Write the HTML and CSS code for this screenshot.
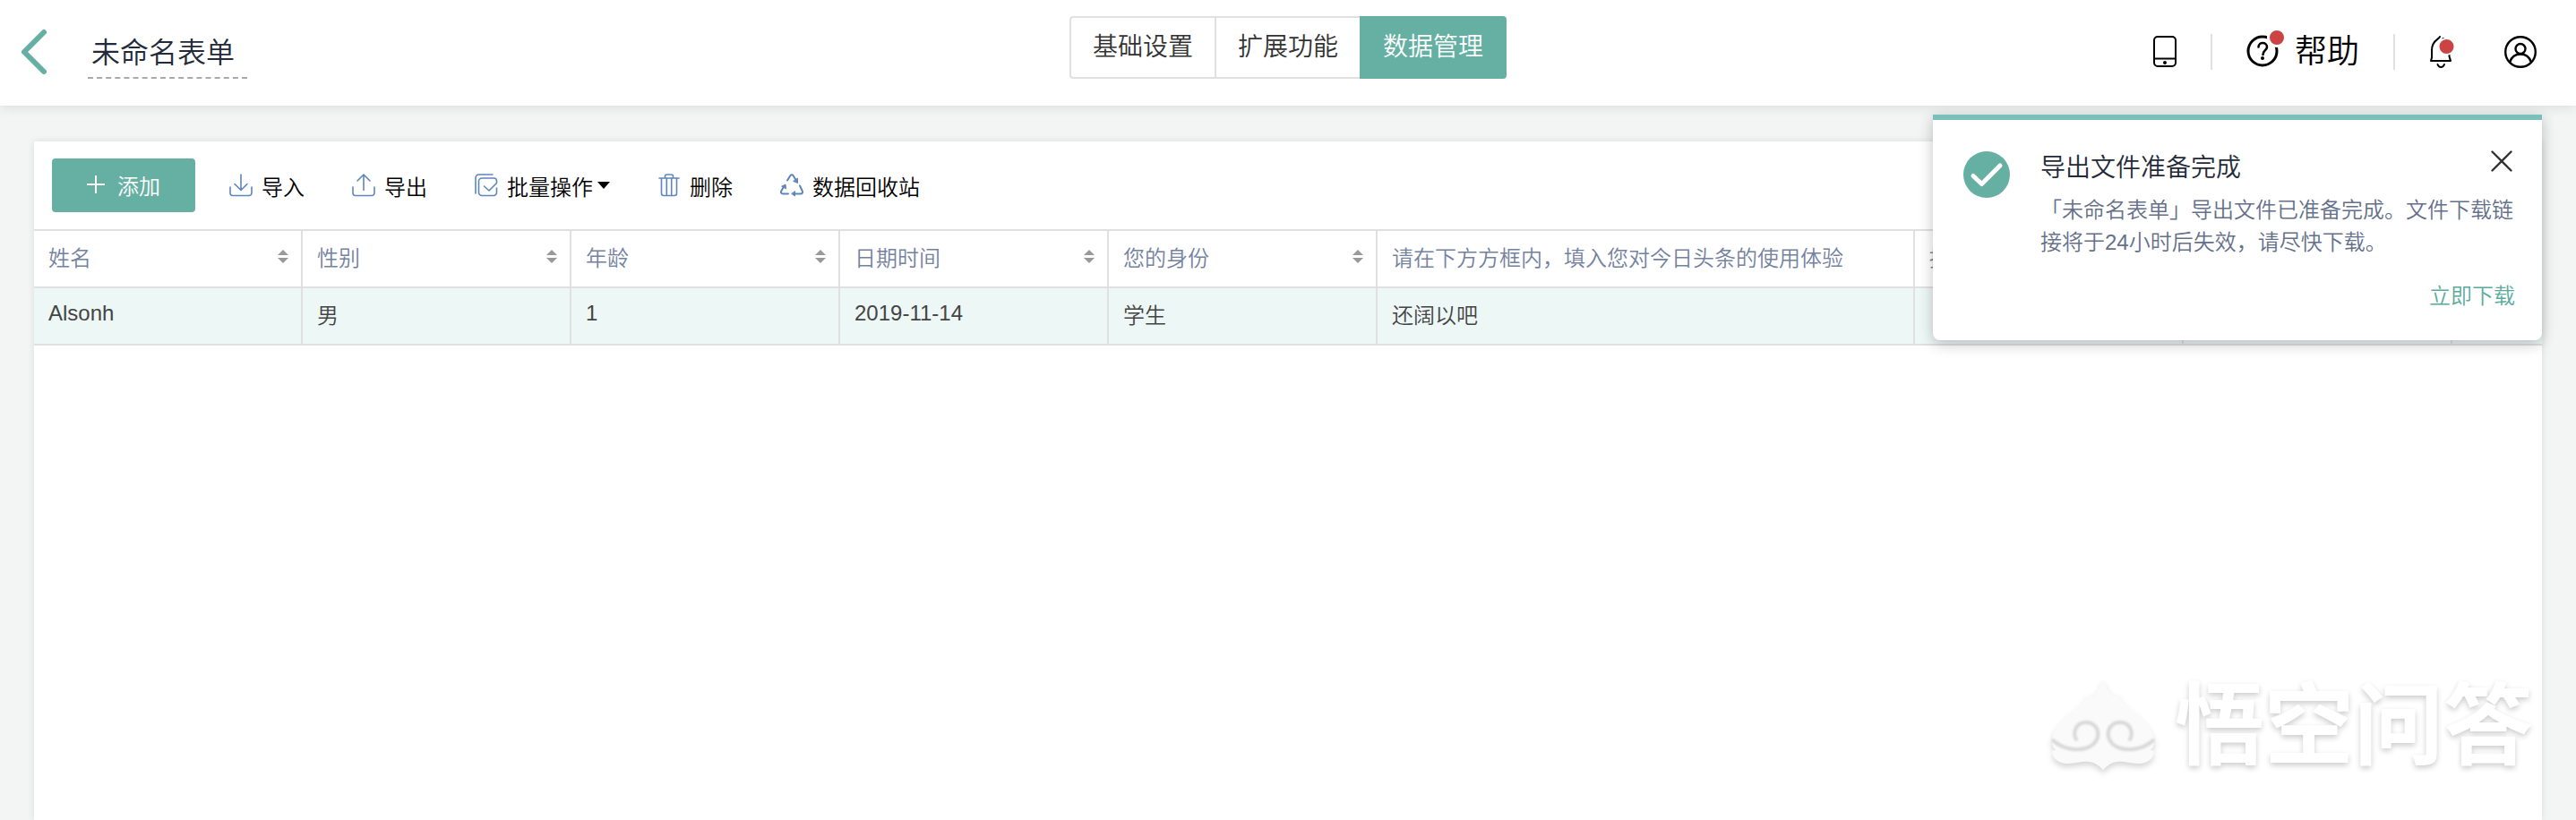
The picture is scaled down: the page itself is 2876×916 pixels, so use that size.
FILE: index.html
```
<!DOCTYPE html>
<html lang="zh-CN">
<head>
  <meta charset="UTF-8">
  <meta name="viewport" content="width=device-width, initial-scale=1.0">
  <title>未命名表单</title>
  <link rel="stylesheet" href="styles.css">
</head>
<body>

<header class="header">
  <div class="header-left">
    <a class="back-link" href="#" aria-label="返回">
      <svg width="32" height="54" viewBox="0 0 32 54" fill="none" stroke="#66b0a3" stroke-width="6" stroke-linecap="round" stroke-linejoin="round"><path d="M27 5 5 27l22 22"/></svg>
    </a>
    <input class="form-title" type="text" value="未命名表单" aria-label="表单名称">
  </div>

  <nav class="tabs">
    <a class="tab" href="#">基础设置</a>
    <a class="tab" href="#">扩展功能</a>
    <a class="tab active" href="#">数据管理</a>
  </nav>

  <div class="header-right">
    <button class="icon-button" type="button" aria-label="手机预览">
      <svg width="26" height="36" viewBox="0 0 26 36" fill="none" stroke="#000" stroke-width="2"><rect x="1" y="1" width="24" height="33" rx="4"/><path d="M1 25.5h24"/><circle cx="13" cy="30" r="2" fill="#000" stroke="none"/></svg>
    </button>
    <span class="divider"></span>
    <button class="icon-button help" type="button">
      <svg width="42" height="44" viewBox="0 0 42 44" fill="none" stroke="#000" stroke-width="3" stroke-linecap="round"><circle cx="18" cy="25" r="16"/><path d="M13.5 20.5c0-6 9.500-6 9.500 0 0 3.500-4.500 4-4.500 8.500" stroke-width="2.600"/><circle cx="18" cy="33" r="2" fill="#000" stroke="none"/><circle cx="34" cy="10" r="9.500" fill="#cc4343" stroke="#fff"/></svg>
      帮助
    </button>
    <span class="divider"></span>
    <button class="icon-button bell" type="button" aria-label="消息">
      <svg width="28" height="38" viewBox="0 0 28 38" fill="none" stroke="#000" stroke-width="2" stroke-linecap="round" stroke-linejoin="round"><path d="M12 2c-1 3-9 4-9 15v8.500L2 29h22l-1.500-5V14c0-6-5-9-7-10"/><path d="M9.500 33c1.500 4 6 4 7.500 0"/><circle cx="19.500" cy="13" r="9" fill="#cc4343" stroke="#fff"/></svg>
    </button>
    <button class="icon-button" type="button" aria-label="个人中心">
      <svg width="36" height="36" viewBox="0 0 36 36" fill="none" stroke="#000" stroke-width="2.400"><circle cx="18" cy="18" r="16.800"/><circle cx="18" cy="14.500" r="5.500"/><path d="M6 29.500c2-6 6.500-9 12-9s10 3 12 9"/></svg>
    </button>
  </div>
</header>

<main class="card">
  <div class="toolbar">
    <button class="add-button" type="button">
      <svg width="20" height="20" viewBox="0 0 20 20" stroke="#fff" stroke-width="2"><path d="M10 0v20M0 10h20"/></svg>
      添加
    </button>
    <button class="tool" type="button">
      <svg class="tool-icon" viewBox="0 0 26 26"><path d="M1 15v6.500a3 3 0 0 0 3 3h18a3 3 0 0 0 3-3V15M13 1v17M6 11.500l7 7 7-7"/></svg>
      导入
    </button>
    <button class="tool" type="button">
      <svg class="tool-icon" viewBox="0 0 26 26"><path d="M1 15v6.500a3 3 0 0 0 3 3h18a3 3 0 0 0 3-3V15M13 18.500V1M6 8l7-7 7 7"/></svg>
      导出
    </button>
    <button class="tool" type="button">
      <svg class="tool-icon" viewBox="0 0 26 26"><path d="M1 22V4.500A3.500 3.500 0 0 1 4.500 1H20M24.500 16v5a3.500 3.500 0 0 1-3.500 3.500H8A3.500 3.500 0 0 1 4.500 21V8.500A3.500 3.500 0 0 1 8 5h13.500a3 3 0 0 1 3 3v2.500L16 19l-5.500-5"/></svg>
      批量操作<span class="caret"></span>
    </button>
    <button class="tool" type="button">
      <svg class="tool-icon" viewBox="0 0 26 26"><path d="M2 5h22M8.500 5V3a2 2 0 0 1 2-2h5a2 2 0 0 1 2 2v2M4.500 5v17a2.500 2.500 0 0 0 2.500 2.500h12A2.500 2.500 0 0 0 21.500 22V5M10.300 6v18M15.700 6v18"/></svg>
      删除
    </button>
    <button class="tool" type="button">
      <svg class="tool-icon" viewBox="0 0 26 26"><path d="M8 7.500 11.500 2a1.800 1.800 0 0 1 3 0L17.500 7M22 13.500l2.800 6a2 2 0 0 1-2 3H16M9 22.500H3a2 2 0 0 1-1.800-3L4 14.500" stroke-width="2"/><path d="M19.500 5.500v5l-4.500-2zM2 14l4-2 .5 4.500zM16.500 20v5L13 22.500z" fill="#5f86b8" stroke-width="1"/></svg>
      数据回收站
    </button>
  </div>

  <table class="data-table">
    <colgroup>
      <col class="col">
      <col class="col">
      <col class="col">
      <col class="col">
      <col class="col">
      <col class="col-wide">
      <col class="col">
      <col class="col">
      <col>
    </colgroup>
    <thead>
      <tr>
        <th><div class="th-inner">姓名<button class="sort" type="button" aria-label="排序"></button></div></th>
        <th><div class="th-inner">性别<button class="sort" type="button" aria-label="排序"></button></div></th>
        <th><div class="th-inner">年龄<button class="sort" type="button" aria-label="排序"></button></div></th>
        <th><div class="th-inner">日期时间<button class="sort" type="button" aria-label="排序"></button></div></th>
        <th><div class="th-inner">您的身份<button class="sort" type="button" aria-label="排序"></button></div></th>
        <th>请在下方方框内，填入您对今日头条的使用体验</th>
        <th>提交人</th>
        <th></th>
        <th></th>
      </tr>
    </thead>
    <tbody>
      <tr>
        <td>Alsonh</td>
        <td>男</td>
        <td>1</td>
        <td>2019-11-14</td>
        <td>学生</td>
        <td>还阔以吧</td>
        <td></td>
        <td></td>
        <td></td>
      </tr>
    </tbody>
  </table>
</main>

<div class="notification" role="alert">
  <svg class="notification-icon" width="52" height="52" viewBox="0 0 52 52" fill="none"><circle cx="26" cy="26" r="26" fill="#66b0a3"/><path d="M11 27.500 20.500 36.500 41 16" stroke="#fff" stroke-width="5" stroke-linecap="round" stroke-linejoin="round"/></svg>
  <div class="notification-body">
    <div class="notification-head">
      <h2 class="notification-title">导出文件准备完成</h2>
      <button class="icon-button" type="button" aria-label="关闭">
        <svg width="24" height="24" viewBox="0 0 24 24" stroke="#333" stroke-width="2.400" stroke-linecap="round"><path d="M1.500 1.500l21 21M22.500 1.500l-21 21"/></svg>
      </button>
    </div>
    <p class="notification-text">「未命名表单」导出文件已准备完成。文件下载链接将于24小时后失效，请尽快下载。</p>
    <a class="notification-link" href="#">立即下载</a>
  </div>
</div>

<div class="watermark">
  <svg class="watermark-logo" width="116" height="106" viewBox="0 0 116 106">
    <path class="flame" d="M58 0c-2 9-7 15-12 21l-4-4C37 32 1 48 1 70c0 5 2 8 4 10-2 0-4 0-4 2 1 8 8 13 17 13 10 0 16-3 25-2 7 1 11 5 15 9 4-4 8-8 15-9 9-1 15 2 25 2 9 0 16-5 17-13 0-2-2-2-4-2 2-2 4-5 4-10 0-22-36-38-41-53l-5 3c-5-6-9-12-11-20z"/>
    <g class="swirls">
      <path d="M2 69c10 9 24 12 36 9 20-5 18-29 1-29-12 0-15 12-11 19"/>
      <path d="M114 69c-10 9-24 12-36 9-20-5-18-29-1-29 12 0 15 12 11 19"/>
    </g>
  </svg>
  <span>悟空问答</span>
</div>

</body>
</html>
```
FILE: styles.css
```
* {
  box-sizing: border-box;
}

body {
  margin: 0;
  min-height: 100vh;
  display: flex;
  flex-direction: column;
  background-color: #f3f5f4;
  font-family: "Liberation Sans", "Noto Sans CJK SC", sans-serif;
  font-size: 24px;
  font-weight: 350;
  color: #444;
}

button,
input {
  font: inherit;
  color: inherit;
  background: none;
  border: none;
  padding: 0;
}

button {
  cursor: pointer;
}

a {
  text-decoration: none;
}

svg {
  display: block;
  flex-shrink: 0;
}

/* header */
.header {
  display: grid;
  grid-template-columns: 1fr auto 1fr;
  align-items: end;
  padding: 18px 22px 30px;
  background-color: #fff;
  box-shadow: 0 2px 12px rgba(0, 0, 0, 0.1);
  position: relative;
}

.header-left,
.header-right {
  display: flex;
  align-items: center;
  height: 60px;
}

.header-left {
  gap: 44px;
}

.form-title {
  width: 178px;
  height: 60px;
  padding: 0 4px 2px;
  border-bottom: 2px dashed #aaa;
  font-size: 32px;
  color: #232b3a;
}

.tabs {
  display: flex;
}

.tab {
  height: 70px;
  padding: 0 24px;
  border: 2px solid #e0e0e0;
  border-right-width: 0;
  font-size: 28px;
  line-height: 66px;
  color: #333;
}

.tab:first-child {
  border-radius: 4px 0 0 4px;
}

.tab.active {
  border-color: #66b0a3;
  border-right-width: 2px;
  border-radius: 0 4px 4px 0;
  background-color: #66b0a3;
  color: #fff;
}

.header-right {
  justify-content: flex-end;
  gap: 38px;
  padding-right: 22px;
}

.divider {
  width: 2px;
  height: 40px;
  background-color: #e0e0e0;
}

.help {
  display: flex;
  align-items: center;
  gap: 12px;
  font-size: 36px;
  line-height: 44px;
  color: #000;
}

.help svg {
  margin-bottom: 8px;
}

.bell {
  margin-right: 18px;
}

/* card with toolbar and table */
.card {
  flex: 1;
  margin: 40px 38px 0;
  background-color: #fff;
  box-shadow: 0 0 8px rgba(0, 0, 0, 0.1);
}

.toolbar {
  display: flex;
  align-items: center;
  gap: 53px;
  height: 98px;
  padding: 0 20px;
}

.add-button {
  display: flex;
  align-items: center;
  justify-content: center;
  gap: 14px;
  width: 160px;
  height: 60px;
  margin-right: -15px;
  padding-bottom: 2px;
  border-radius: 4px;
  background-color: #66b0a3;
  color: #fff;
}

.tool {
  display: flex;
  align-items: center;
  gap: 10px;
  color: #000;
}

.tool-icon {
  width: 26px;
  height: 26px;
  fill: none;
  stroke: #5f86b8;
  stroke-width: 1.6px;
  stroke-linecap: round;
  stroke-linejoin: round;
}

.caret {
  margin-left: -5px;
  border: 7px solid transparent;
  border-top: 8px solid #000;
  border-bottom: none;
}

.data-table {
  width: 100%;
  table-layout: fixed;
  border-collapse: separate;
  border-spacing: 0;
  border-top: 2px solid #e0e0e0;
}

.col {
  width: 300px;
}

.col-wide {
  width: 600px;
}

.data-table th,
.data-table td {
  height: 64px;
  padding: 0 14px 6px 16px;
  border-right: 2px solid #e0e0e0;
  border-bottom: 2px solid #e0e0e0;
  text-align: left;
  font-weight: 350;
  white-space: nowrap;
}

.data-table th:last-child,
.data-table td:last-child {
  border-right: none;
}

.data-table th {
  color: #7482a0;
}

.data-table td {
  background-color: #edf7f6;
  color: #444;
}

.th-inner {
  display: flex;
  align-items: center;
  justify-content: space-between;
}

.sort::before,
.sort::after {
  content: "";
  display: block;
  border: 6px solid transparent;
}

.sort::before {
  border-top: none;
  border-bottom-color: #999;
  margin-bottom: 3px;
}

.sort::after {
  border-bottom: none;
  border-top-color: #999;
}

/* export notification */
.notification {
  position: absolute;
  top: 128px;
  right: 38px;
  display: flex;
  align-items: flex-start;
  gap: 34px;
  width: 680px;
  padding: 34px 30px 31px 34px;
  border-top: 6px solid #7cc0bb;
  border-radius: 0 0 8px 8px;
  background-color: #fff;
  box-shadow: 0 4px 16px rgba(0, 0, 0, 0.24);
}

.notification-icon {
  margin-top: 1px;
}

.notification-body {
  flex: 1;
  display: flex;
  flex-direction: column;
}

.notification-head {
  display: flex;
  align-items: flex-start;
  justify-content: space-between;
  padding-right: 3px;
}

.notification-title {
  margin: 0;
  font-size: 28px;
  font-weight: 350;
  line-height: 40px;
  color: #232b3a;
}

.notification-text {
  margin: 9px 0 24px;
  line-height: 36px;
  color: #65708a;
}

.notification-link {
  align-self: flex-end;
  line-height: 36px;
  color: #5aab9c;
}

/* watermark in the corner */
.watermark {
  position: absolute;
  right: 48px;
  bottom: 52px;
  display: flex;
  align-items: center;
  gap: 22px;
  font-size: 100px;
  font-weight: 700;
  line-height: 106px;
  color: #fff;
  text-shadow: 0 3px 6px rgba(0, 0, 0, 0.2);
  pointer-events: none;
}

.watermark-logo {
  filter: drop-shadow(0 4px 3px rgba(0, 0, 0, 0.16));
}

.flame {
  fill: #fafafa;
}

.swirls {
  fill: none;
  stroke: #d8d8d8;
  stroke-width: 4px;
  stroke-linecap: round;
  filter: blur(1px);
}
```
